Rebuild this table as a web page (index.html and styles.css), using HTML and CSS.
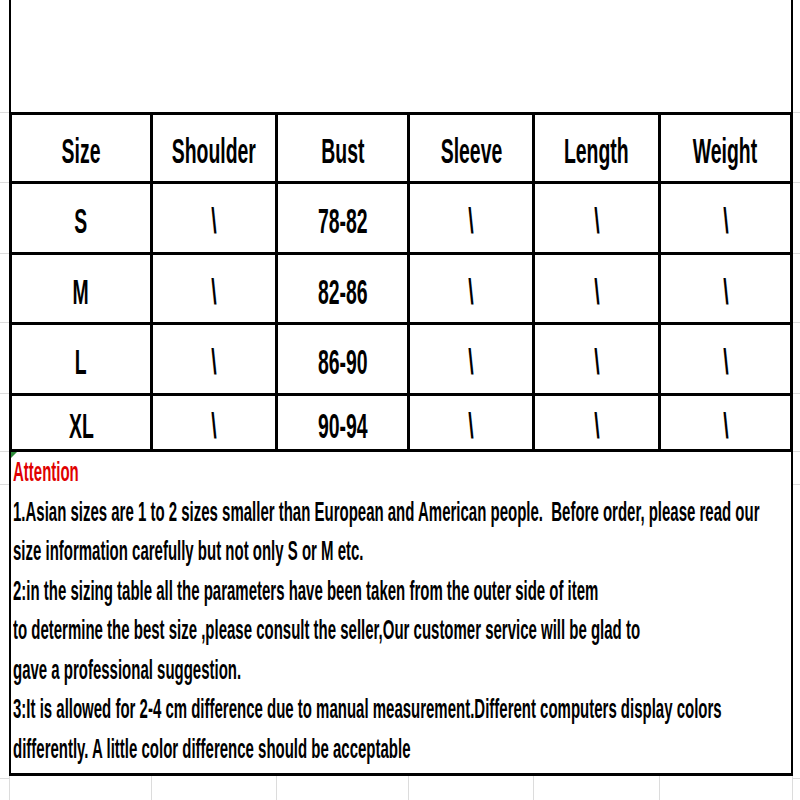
FILE: index.html
```html
<!DOCTYPE html>
<html>
<head>
<meta charset="utf-8">
<link rel="stylesheet" href="styles.css">
</head>
<body>
<div class="sheet">
  <div class="strip strip-left">
    <div class="g g1"></div><div class="g g2"></div><div class="g g3"></div><div class="g g4"></div>
    <div class="g g5"></div><div class="g g6"></div><div class="g g7"></div><div class="g g8"></div>
  </div>
  <div class="main">
    <div class="top"></div>
    <div class="table">
      <div class="cell"><span>Size</span></div>
      <div class="cell"><span>Shoulder</span></div>
      <div class="cell"><span>Bust</span></div>
      <div class="cell"><span>Sleeve</span></div>
      <div class="cell"><span>Length</span></div>
      <div class="cell"><span>Weight</span></div>

      <div class="cell"><span>S</span></div>
      <div class="cell"><span>\</span></div>
      <div class="cell"><span>78-82</span></div>
      <div class="cell"><span>\</span></div>
      <div class="cell"><span>\</span></div>
      <div class="cell"><span>\</span></div>

      <div class="cell"><span>M</span></div>
      <div class="cell"><span>\</span></div>
      <div class="cell"><span>82-86</span></div>
      <div class="cell"><span>\</span></div>
      <div class="cell"><span>\</span></div>
      <div class="cell"><span>\</span></div>

      <div class="cell"><span>L</span></div>
      <div class="cell"><span>\</span></div>
      <div class="cell"><span>86-90</span></div>
      <div class="cell"><span>\</span></div>
      <div class="cell"><span>\</span></div>
      <div class="cell"><span>\</span></div>

      <div class="cell"><span>XL</span></div>
      <div class="cell"><span>\</span></div>
      <div class="cell"><span>90-94</span></div>
      <div class="cell"><span>\</span></div>
      <div class="cell"><span>\</span></div>
      <div class="cell"><span>\</span></div>
    </div>
    <div class="notes">
      <span class="flag"></span>
      <div class="ln red"><span>Attention</span></div>
      <div class="ln"><span>1.Asian sizes are 1 to 2 sizes smaller than European and American people.  Before order, please read our</span></div>
      <div class="ln"><span>size information carefully but not only S or M etc.</span></div>
      <div class="ln"><span>2:in the sizing table all the parameters have been taken from the outer side of item</span></div>
      <div class="ln"><span>to determine the best size ,please consult the seller,Our customer service will be glad to</span></div>
      <div class="ln"><span>gave a professional suggestion.</span></div>
      <div class="ln"><span>3:It is allowed for 2-4 cm difference due to manual measurement.Different computers display colors</span></div>
      <div class="ln"><span>differently. A little color difference should be acceptable</span></div>
    </div>
    <div class="below">
      <div class="bc"></div><div class="bc"></div><div class="bc"></div>
      <div class="bc"></div><div class="bc"></div><div class="bc last"></div>
    </div>
  </div>
  <div class="strip strip-right">
    <div class="g g1"></div><div class="g g2"></div><div class="g g3"></div><div class="g g4"></div>
    <div class="g g5"></div><div class="g g6"></div><div class="g g7"></div><div class="g g8"></div>
  </div>
</div>
</body>
</html>
```

FILE: styles.css
```css
html, body {
  margin: 0;
  padding: 0;
  background: #fff;
}
body {
  width: 800px;
  height: 800px;
  overflow: hidden;
  font-family: "Liberation Sans", Arial, sans-serif;
  color: #000;
}
.sheet {
  display: flex;
  width: 800px;
  height: 800px;
  overflow: hidden;
}
.strip {
  display: flex;
  flex-direction: column;
}
.strip-left { width: 9px; }
.strip-right { width: 7px; }
.g {
  box-sizing: border-box;
  border-bottom: 1px solid #dcdcdc;
  flex: none;
}
.g1 { height: 113px; }
.g2 { height: 70px; }
.g3 { height: 71px; }
.g4 { height: 69px; }
.g5 { height: 71px; }
.g6 { height: 58px; }
.g7 { height: 33px; }
.g8 { height: 294px; }

.main {
  width: 784px;
  display: flex;
  flex-direction: column;
  overflow: hidden;
}
.top {
  box-sizing: border-box;
  height: 112px;
  border-left: 2px solid #000;
  border-right: 2px solid #000;
}
.table {
  display: grid;
  grid-template-columns: 138px 122px 129px 122px 123px 129px;
  grid-template-rows: 66px 68px 67px 68px 53px;
  gap: 3px;
  padding: 3px;
  background: #000;
}
.cell {
  background: #fff;
  display: flex;
  align-items: center;
  justify-content: center;
  padding-top: 6px;
  box-sizing: border-box;
  font-size: 35px;
  font-weight: bold;
  white-space: nowrap;
  overflow: hidden;
}
.cell span {
  display: inline-block;
  transform: scaleX(0.555);
  transform-origin: center;
}
.notes {
  position: relative;
  box-sizing: border-box;
  height: 324px;
  padding: 1px 0 4px 2px;
  border-left: 2px solid #000;
  border-right: 2px solid #000;
  border-bottom: 3px solid #000;
  font-size: 27px;
  font-weight: bold;
  overflow: hidden;
}
.flag {
  position: absolute;
  left: 0;
  top: 0;
  width: 0;
  height: 0;
  border-top: 6px solid #2e8b3a;
  border-right: 6px solid transparent;
}
.ln {
  height: 39.5px;
  line-height: 39.5px;
  white-space: pre;
  overflow: hidden;
}
.ln span {
  display: inline-block;
  transform: scaleX(0.555);
  transform-origin: left center;
}
.red {
  color: #e00000;
}
.below {
  flex: 1;
  display: grid;
  grid-template-columns: 142px 125px 132px 125px 126px 134px;
}
.bc {
  border-left: 1px solid #dcdcdc;
}
.bc.last {
  border-right: 1px solid #dcdcdc;
}
```
